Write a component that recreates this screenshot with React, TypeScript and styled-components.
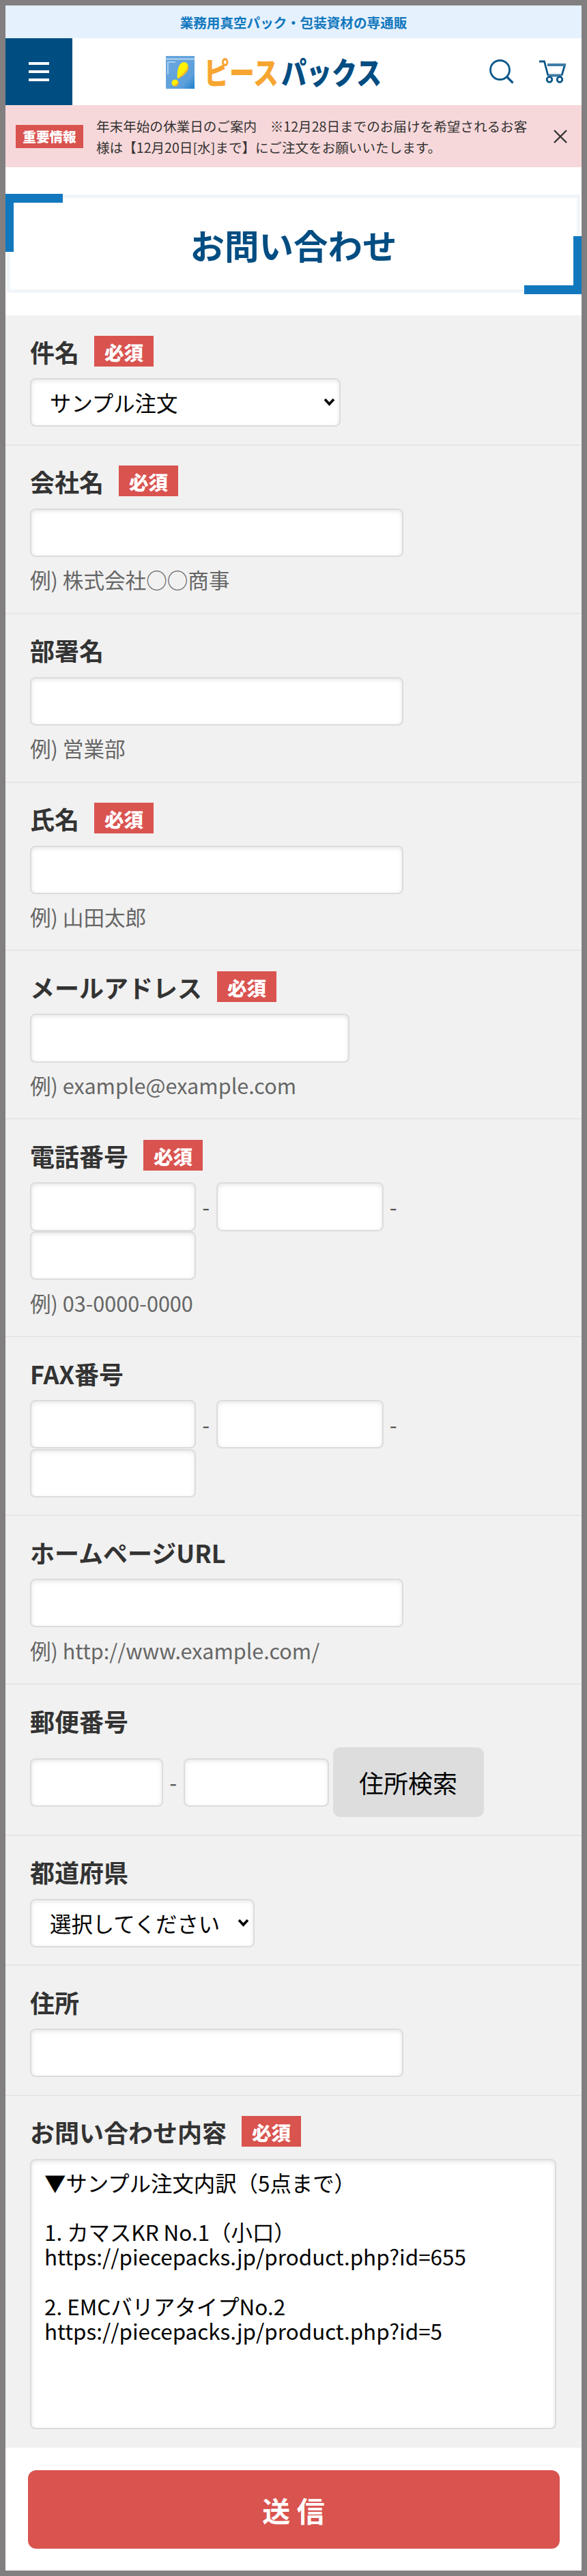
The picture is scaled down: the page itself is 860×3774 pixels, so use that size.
import React from 'react';
import styled, { createGlobalStyle } from 'styled-components';

const GlobalStyle = createGlobalStyle`
    *,
    *::before,
    *::after {
        box-sizing: border-box;
    }
    body {
        margin: 0;
        background: #fff;
    }
    body, input, select, textarea, button {
        font-family: 'Noto Sans CJK JP', 'Noto Sans', sans-serif;
    }
`;

const Page = styled.div`
    width: 860px;
    height: 3774px;
    border: 8px solid #827f80;
    background: #fff;
    color: #333;
    overflow: hidden;
`;

const TopBar = styled.p`
    margin: 0;
    height: 48px;
    line-height: 49px;
    text-align: center;
    font-size: 19.6px;
    font-weight: 700;
    color: #1278be;
    background: #e5f1fd;
`;

const Header = styled.header`
    height: 98px;
    display: grid;
    grid-template-columns: 98px 1fr auto;
    align-items: center;
`;

const MenuButton = styled.button`
    width: 98px;
    height: 98px;
    padding: 0;
    border: 0;
    background: #004d82;
    display: flex;
    flex-direction: column;
    align-items: center;
    justify-content: center;
    gap: 8px;
`;

const MenuLine = styled.span`
    width: 30px;
    height: 4px;
    background: #fff;
`;

const Logo = styled.a`
    display: block;
    height: 50px;
    margin-left: 136px;
    margin-top: 2px;
    svg {
        display: block;
        overflow: visible;
    }
`;

const HeaderIcons = styled.div`
    display: flex;
    align-items: center;
    gap: 37px;
    margin-right: 22px;
    svg {
        display: block;
    }
`;

const Notice = styled.div`
    height: 91px;
    display: flex;
    align-items: center;
    padding: 0 21px 0 15px;
    background: #f7d8da;
`;

const NoticeBadge = styled.strong`
    width: 99px;
    height: 34px;
    flex: none;
    margin-right: 20px;
    line-height: 33px;
    text-align: center;
    font-size: 19.6px;
    font-weight: 900;
    color: #fff;
    background: #d9534f;
`;

const NoticeText = styled.p`
    flex: 1;
    margin: 0 0 0 -1px;
    padding-top: 1px;
    font-size: 19.6px;
    line-height: 31px;
    white-space: nowrap;
`;

const TitleBox = styled.div`
    position: relative;
    margin: 40px 2px 33px;
    height: 144px;
    border: 5px solid #f1f5f9;
    display: flex;
    align-items: center;
    justify-content: center;
    &::before,
    &::after {
        content: '';
        position: absolute;
        width: 84px;
        height: 85px;
        border: 0 solid #1278be;
    }
    &::before {
        left: -7px;
        top: -6px;
        border-width: 13px 0 0 12px;
    }
    &::after {
        right: -7px;
        bottom: -7px;
        border-width: 0 12px 13px 0;
    }
`;

const Title = styled.h1`
    margin: 1px 0 0;
    font-size: 50.5px;
    line-height: 70px;
    color: #004d82;
`;

const Form = styled.form`
    margin: 0;
`;

const Row = styled.div`
    padding: 26px 36px 25.4px;
    background: #f1f1f1;
    border-bottom: 2px solid #e6e6e6;
    &:last-of-type {
        border-bottom-color: #f1f1f1;
    }
`;

const Label = styled.label`
    display: flex;
    align-items: center;
    height: 52px;
    margin-bottom: 14px;
    font-size: 36px;
    font-weight: 700;
    span {
        padding-top: 1px;
        line-height: 52px;
    }
`;

const Required = styled.em`
    width: 87px;
    height: 45px;
    margin-left: 22px;
    padding-top: 1px;
    line-height: 45px;
    text-align: center;
    font-size: 28.6px;
    font-weight: 900;
    font-style: normal;
    color: #fff;
    background: #d9534f;
`;

const Input = styled.input<{ $width: number }>`
    display: block;
    width: ${(p) => p.$width}px;
    height: 71.2px;
    padding: 0 20px;
    border: 2px solid #dcdcdc;
    border-radius: 8px;
    background: #fff;
    box-shadow: inset 0 2px 6px rgba(0, 0, 0, 0.1);
    font-size: 31.4px;
    color: #000;
    outline: 0;
`;

const SelectWrap = styled.div<{ $width: number }>`
    display: grid;
    width: ${(p) => p.$width}px;
    height: 71.2px;
    align-items: center;
    > * {
        grid-area: 1 / 1;
    }
    svg {
        justify-self: end;
        margin: 0 8px 1px 0;
        pointer-events: none;
    }
`;

const SelectField = styled(Input)`
    appearance: none;
    padding: 0 27px;
`;

const Fields = styled.div`
    display: flex;
    flex-wrap: wrap;
    align-items: center;
    row-gap: 0.4px;
`;

const Dash = styled.span`
    width: 29.5px;
    text-align: center;
    font-size: 31.4px;
    line-height: 40px;
    color: #555;
`;

const SearchButton = styled.button`
    width: 221px;
    height: 102px;
    margin-left: 6px;
    padding: 0;
    border: 0;
    border-radius: 10px;
    font-size: 36px;
    color: #000;
    background: #ddd;
`;

const Hint = styled.p`
    margin: 10.4px 0 0;
    font-size: 30.6px;
    line-height: 46px;
    color: #666;
`;

const Message = styled.textarea`
    display: block;
    width: 771px;
    height: 396px;
    padding: 15px 19px;
    border: 2px solid #dcdcdc;
    border-radius: 8px;
    box-shadow: inset 0 2px 6px rgba(0, 0, 0, 0.1);
    font-size: 31.4px;
    line-height: 36.2px;
    color: #000;
    resize: none;
    outline: 0;
`;

const Submit = styled.button`
    display: block;
    width: 779px;
    height: 115px;
    margin: 33px auto 0;
    padding: 0;
    border: 0;
    border-radius: 12px;
    font-size: 41px;
    font-weight: 700;
    color: #fff;
    background: #d9534f;
`;

const LogoText = styled.text`
    font-size: 45px;
    font-weight: 900;
`;

const LogoMark = () => (
    <svg width="318" height="50" viewBox="0 0 318 50">
        <defs>
            <linearGradient id="bag" x1="0" y1="0" x2="1" y2="1">
                <stop offset="0.3" stopColor="#66a5de" />
                <stop offset="0.75" stopColor="#5b9fdb" />
                <stop offset="1" stopColor="#1c7fc8" />
            </linearGradient>
        </defs>
        <rect x="1" y="1" width="42" height="48" fill="url(#bag)" />
        <path d="M0 5.5h44" stroke="#cfe3f5" strokeWidth="1.5" />
        <path d="M4 28V10h11" fill="none" stroke="#a6ccee" strokeWidth="2" />
        <path
            d="M18 34C17 25 19 11 27 10c7-1 9 8 4 15-4 5-9 8-13 9z"
            fill="#fff000"
        />
        <path d="M33 14c2 4 1 8-2 11-4 5-9 8-13 9 8-7 14-11 15-20z" fill="#f5b52e" />
        <circle cx="14.5" cy="40.5" r="5" fill="#fff000" />
        <path d="M18.5 37.5a5 5 0 0 1-7 7c4 0 7-3 7-7z" fill="#f5a52e" />
        <LogoText
            x="57"
            y="43"
            textLength="109"
            lengthAdjust="spacingAndGlyphs"
            fill="#f7a531"
        >
            ピース
        </LogoText>
        <LogoText
            x="170"
            y="43"
            textLength="147"
            lengthAdjust="spacingAndGlyphs"
            fill="#004d82"
        >
            パックス
        </LogoText>
    </svg>
);

const SearchIcon = () => (
    <svg width="36" height="36" viewBox="0 0 36 36" fill="none" stroke="#0b5789">
        <circle cx="15.5" cy="15.5" r="14" strokeWidth="2.8" />
        <path d="M25 25l9.5 9.5" strokeWidth="3.2" />
    </svg>
);

const CartIcon = () => (
    <svg width="40" height="34" viewBox="0 0 40 34" fill="none" stroke="#0b5789">
        <path d="M0 2h7.5l5.5 21" strokeWidth="2.8" />
        <path d="M38 5.5l-5 17" strokeWidth="2.8" />
        <path d="M12 7h27M13 22.5h20" stroke="#3f7da6" strokeWidth="4" />
        <circle cx="15" cy="28.5" r="3.8" strokeWidth="2.8" />
        <circle cx="30" cy="28.5" r="3.8" strokeWidth="2.8" />
    </svg>
);

const CloseIcon = () => (
    <svg width="20" height="20" viewBox="0 0 20 20" stroke="#333" strokeWidth="2.4">
        <path d="M1 1l18 18M19 1L1 19" />
    </svg>
);

type FieldProps = {
    label: string;
    required?: boolean;
    hint?: string;
    children: React.ReactNode;
};

const Field = ({ label, required, hint, children }: FieldProps) => (
    <Row>
        <Label>
            <span>{label}</span>
            {required && <Required>必須</Required>}
        </Label>
        {children}
        {hint && <Hint>例) {hint}</Hint>}
    </Row>
);

const Select = ({ width, value }: { width: number; value: string }) => (
    <SelectWrap $width={width}>
        <SelectField as="select" $width={width} defaultValue={value}>
            <option>{value}</option>
        </SelectField>
        <svg width="17" height="12" viewBox="0 0 17 12" fill="none">
            <path d="M2 2l6.5 7L15 2" stroke="#000" strokeWidth="3.6" />
        </svg>
    </SelectWrap>
);

const PhoneFields = () => (
    <Fields>
        <Input $width={243} />
        <Dash>-</Dash>
        <Input $width={245} />
        <Dash>-</Dash>
        <Input $width={243} />
    </Fields>
);

const message = `▼サンプル注文内訳（5点まで）

1. カマスKR No.1（小口）
https://piecepacks.jp/product.php?id=655

2. EMCバリアタイプNo.2
https://piecepacks.jp/product.php?id=5`;

const App = () => {
    return (
        <Page lang="ja">
            <GlobalStyle />
            <TopBar>業務用真空パック・包装資材の専通販</TopBar>
            <Header>
                <MenuButton>
                    <MenuLine />
                    <MenuLine />
                    <MenuLine />
                </MenuButton>
                <Logo>
                    <LogoMark />
                </Logo>
                <HeaderIcons>
                    <SearchIcon />
                    <CartIcon />
                </HeaderIcons>
            </Header>
            <Notice>
                <NoticeBadge>重要情報</NoticeBadge>
                <NoticeText>
                    年末年始の休業日のご案内　※12月28日までのお届けを希望されるお客
                    <br />
                    様は【12月20日[水]まで】にご注文をお願いいたします。
                </NoticeText>
                <CloseIcon />
            </Notice>
            <TitleBox>
                <Title>お問い合わせ</Title>
            </TitleBox>
            <Form>
                <Field label="件名" required>
                    <Select width={455} value="サンプル注文" />
                </Field>
                <Field label="会社名" required hint="株式会社○○商事">
                    <Input $width={547} />
                </Field>
                <Field label="部署名" hint="営業部">
                    <Input $width={547} />
                </Field>
                <Field label="氏名" required hint="山田太郎">
                    <Input $width={547} />
                </Field>
                <Field label="メールアドレス" required hint="example@example.com">
                    <Input $width={468} />
                </Field>
                <Field label="電話番号" required hint="03-0000-0000">
                    <PhoneFields />
                </Field>
                <Field label="FAX番号">
                    <PhoneFields />
                </Field>
                <Field label="ホームページURL" hint="http://www.example.com/">
                    <Input $width={547} />
                </Field>
                <Field label="郵便番号">
                    <Fields>
                        <Input $width={195} />
                        <Dash>-</Dash>
                        <Input $width={213} />
                        <SearchButton type="button">住所検索</SearchButton>
                    </Fields>
                </Field>
                <Field label="都道府県">
                    <Select width={329} value="選択してください" />
                </Field>
                <Field label="住所">
                    <Input $width={547} />
                </Field>
                <Field label="お問い合わせ内容" required>
                    <Message defaultValue={message} />
                </Field>
                <Submit type="button">送 信</Submit>
            </Form>
        </Page>
    );
};

export default App;
